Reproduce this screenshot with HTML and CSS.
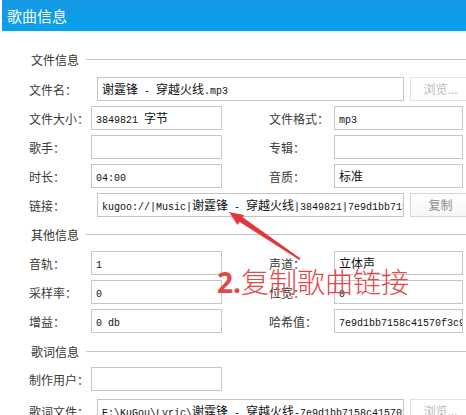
FILE: index.html
```html
<!DOCTYPE html>
<html lang="zh-CN">
<head>
<meta charset="utf-8">
<title>歌曲信息</title>
<link rel="stylesheet" href="styles.css">
</head>
<body>
<div class="window">
  <div class="titlebar">歌曲信息</div>
  <div class="content">
    <section class="group g1">
      <div class="group-title">文件信息</div>
      <div class="row wide">
        <span class="label">文件名：</span>
        <div class="field">谢霆锋<span class="a"> - </span>穿越火线<span class="a">.mp3</span></div>
        <div class="btn disabled">浏览...</div>
      </div>
      <div class="row pair">
        <span class="label">文件大小：</span>
        <div class="field"><span class="a">3849821 </span>字节</div>
        <span class="label r">文件格式：</span>
        <div class="field"><span class="a">mp3</span></div>
      </div>
      <div class="row pair">
        <span class="label">歌手：</span>
        <div class="field"></div>
        <span class="label r">专辑：</span>
        <div class="field"></div>
      </div>
      <div class="row pair">
        <span class="label">时长：</span>
        <div class="field"><span class="a">04:00</span></div>
        <span class="label r">音质：</span>
        <div class="field">标准</div>
      </div>
      <div class="row wide">
        <span class="label">链接：</span>
        <div class="field"><span class="a">kugoo://|Music|</span>谢霆锋<span class="a"> - </span>穿越火线<span class="a">|3849821|7e9d1bb7158c41570f3c9a2e|</span></div>
        <div class="btn">复制</div>
      </div>
    </section>

    <section class="group g2">
      <div class="group-title">其他信息</div>
      <div class="row pair">
        <span class="label">音轨：</span>
        <div class="field"><span class="a">1</span></div>
        <span class="label r">声道：</span>
        <div class="field">立体声</div>
      </div>
      <div class="row pair">
        <span class="label">采样率：</span>
        <div class="field"><span class="a">0</span></div>
        <span class="label r">位宽：</span>
        <div class="field"><span class="a">0</span></div>
      </div>
      <div class="row pair">
        <span class="label">增益：</span>
        <div class="field"><span class="a">0 db</span></div>
        <span class="label r">哈希值：</span>
        <div class="field"><span class="a">7e9d1bb7158c41570f3c9a2e</span></div>
      </div>
    </section>

    <section class="group g3">
      <div class="group-title">歌词信息</div>
      <div class="row pair">
        <span class="label">制作用户：</span>
        <div class="field"></div>
      </div>
      <div class="row wide lyric">
        <span class="label">歌词文件：</span>
        <div class="field"><span class="a">E:\KuGou\Lyric\</span>谢霆锋<span class="a"> - </span>穿越火线<span class="a">-7e9d1bb7158c41570f3c9a2e.krc</span></div>
        <div class="btn disabled">浏览...</div>
      </div>
    </section>
  </div>

  <svg class="arrow" width="466" height="415" viewBox="0 0 466 415" aria-hidden="true">
    <polygon points="300.6,258.4 299.4,260 238.2,220.9 241.2,216.3" fill="#e2383c"/>
    <polygon points="229,212 244,215 237.5,225" fill="#e2383c"/>
  </svg>
  <div class="callout"><span class="num">2.</span>复制歌曲链接</div>
</div>
</body>
</html>
```

FILE: styles.css
```css
* {
  box-sizing: border-box;
}

html, body {
  margin: 0;
  padding: 0;
  background: #ffffff;
}

body {
  font-family: "Noto Sans CJK SC", "Noto Sans", sans-serif;
  font-size: 12px;
  color: #333333;
}

.window {
  position: relative;
  width: 466px;
  height: 415px;
  overflow: hidden;
  background: #ffffff;
}

.titlebar {
  height: 31px;
  margin-left: 2px;
  padding-left: 5px;
  line-height: 31px;
  font-size: 15px;
  color: #ffffff;
  background: linear-gradient(to bottom, #1798e4, #06a1ed);
}

.content {
  padding: 0 1px 0 29px;
}

.group {
  display: flex;
  flex-direction: column;
  gap: 5px;
}

.group-title {
  display: flex;
  align-items: center;
  gap: 7px;
  height: 18px;
  padding-left: 2px;
  margin-right: -1px;
  color: #333333;
}

.group-title::after {
  content: "";
  flex: 1;
  border-top: 1px solid #c4c4c4;
}

.g1 {
  margin-top: 19px;
}

.g1 .group-title {
  margin-bottom: 4px;
}

.g2 {
  margin-top: 8px;
}

.g2 .group-title {
  margin-bottom: 3px;
}

.g3 {
  margin-top: 9px;
}

.g3 .group-title {
  margin-bottom: 2px;
}

.g3 .lyric {
  margin-top: 3px;
}

.row {
  display: grid;
  height: 24px;
  align-items: center;
}

.pair {
  grid-template-columns: 62px 131px 112px 129px;
}

.wide {
  grid-template-columns: 62px 307px 61px;
  column-gap: 6px;
}

.label {
  white-space: nowrap;
  color: #3a3a3a;
}

.label.r {
  padding-left: 47px;
}

.field {
  height: 24px;
  border: 1px solid #c6c6c6;
  padding: 0 4px;
  line-height: 22px;
  white-space: nowrap;
  overflow: hidden;
  color: #111111;
  background: #ffffff;
}

.a {
  font-family: "Liberation Mono", "DejaVu Sans Mono", monospace;
  font-size: 10px;
}

.btn {
  height: 24px;
  border: 1px solid #d6d6d6;
  line-height: 22px;
  text-align: center;
  color: #8a8a8a;
  background: linear-gradient(to bottom, #ffffff, #f6f6f6);
}

.btn.disabled {
  color: #b9b9b9;
  border-color: #e2e2e2;
  background: #ffffff;
}

.arrow {
  position: absolute;
  left: 0;
  top: 0;
  pointer-events: none;
}

.callout {
  position: absolute;
  left: 217px;
  top: 264px;
  font-size: 28px;
  line-height: 34px;
  font-weight: 300;
  color: #e2474a;
  white-space: nowrap;
}

.callout .num {
  font-family: "Noto Sans", "Liberation Sans", sans-serif;
  font-weight: 700;
}
```
